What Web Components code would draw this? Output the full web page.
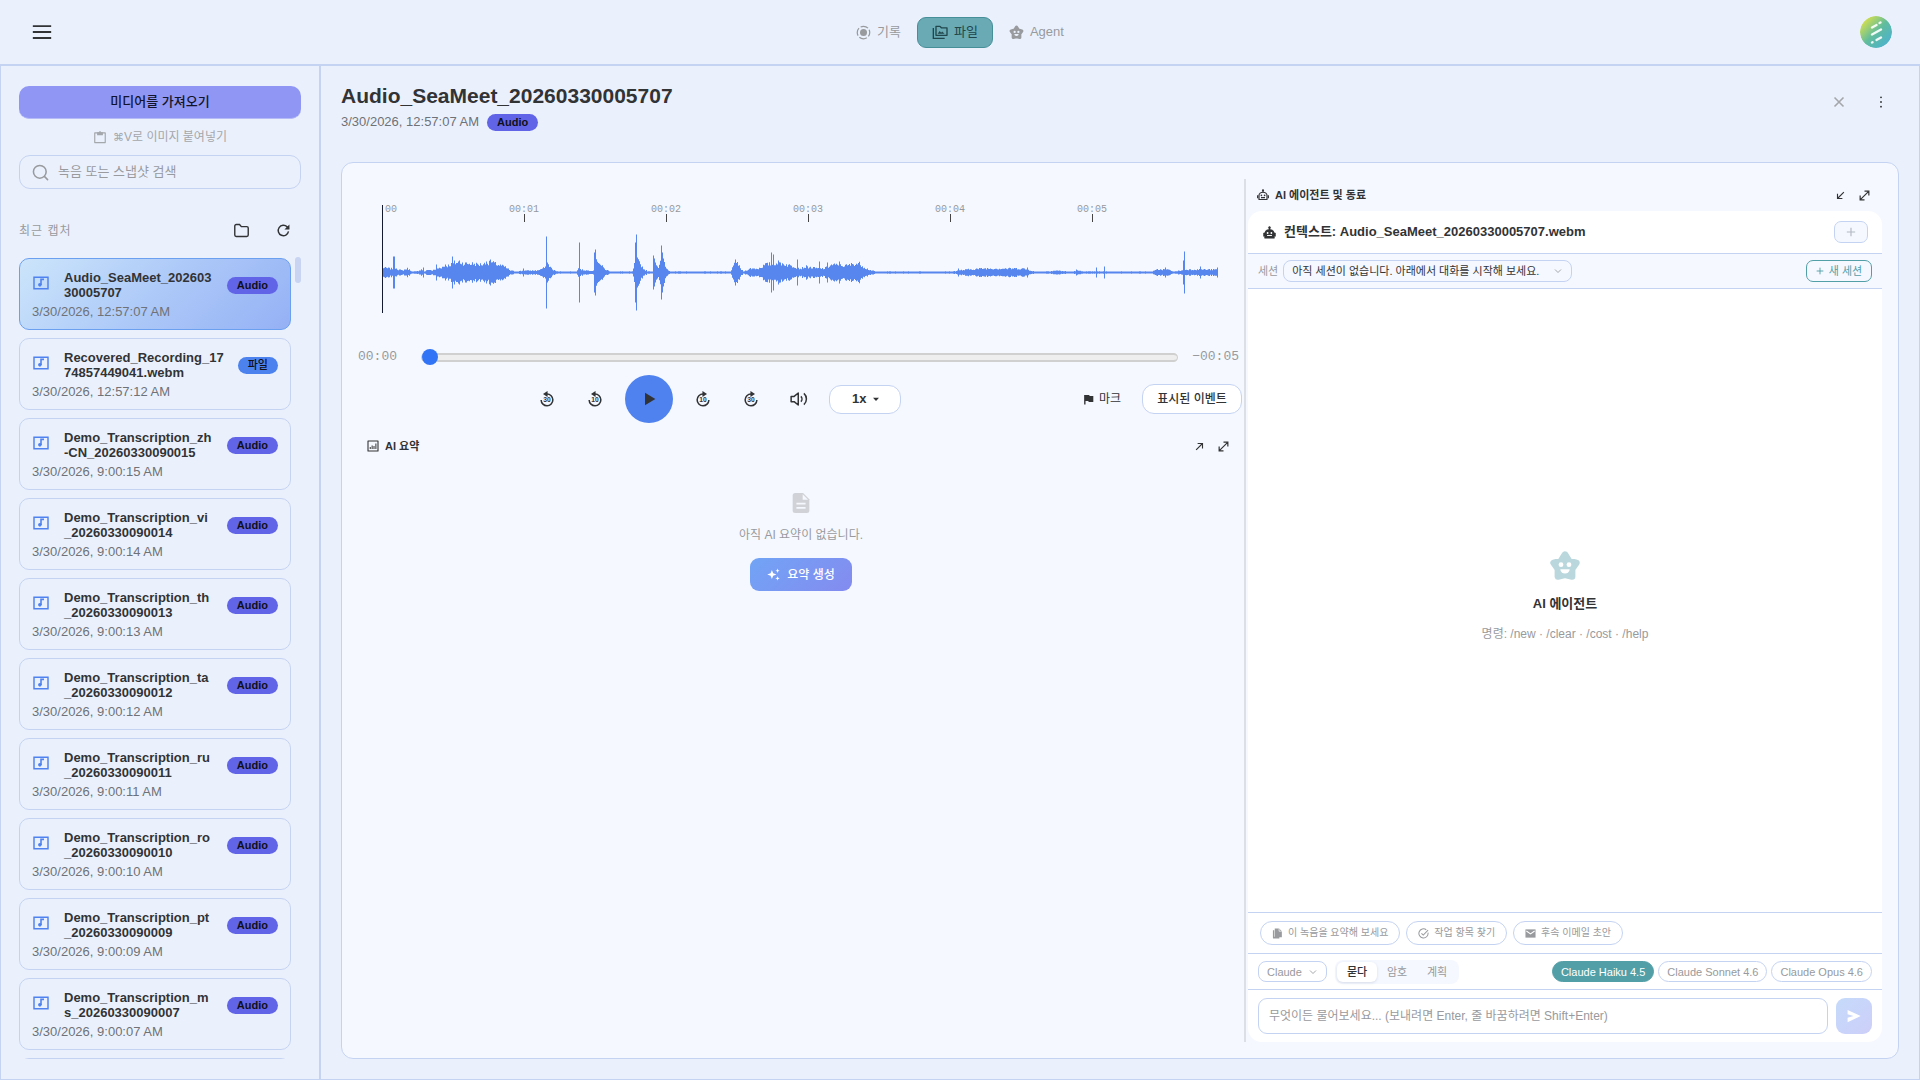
<!DOCTYPE html>
<html lang="ko">
<head>
<meta charset="utf-8">
<title>Audio_SeaMeet_20260330005707</title>
<style>
  html, body { height: 100%; margin: 0; }
  body {
    --line: #c5d3f2; --ink: #323335; --muted: #989a9d; --sub: #6f7276;
    --blue: #4f82ee; --teal: #529fa8; --page: #eaf1fd; --panel: #f5f8ff;
    font-family: "Liberation Sans", "Noto Sans CJK KR", sans-serif;
    font-size: 13px; line-height: 16px; color: var(--ink); background: var(--page);
  }
</style>
</head>
<body>
<sm-app></sm-app>
<script>
const BASE = `
*{box-sizing:border-box}
button,input,select{font:inherit;color:inherit;margin:0;letter-spacing:inherit}
button{display:inline-flex;align-items:center;justify-content:center;background:none;border:0;padding:0;cursor:pointer;white-space:nowrap}
h1,h2,h3,p{margin:0;font-size:inherit;font-weight:inherit}
svg{display:block}
`;
const STAR = 'M12 3.500 15 8.200 20.500 9.700 17.300 14.200 17.300 19.800 12 18.600 6.700 19.800 6.700 14.200 3.500 9.700 9 8.200Z';
const ICONS = {
  menu: '<path d="M2 5.500h20M2 12h20M2 18.500h20" stroke="currentColor" stroke-width="2"/>',
  record: '<circle cx="12" cy="12" r="5.600" fill="currentColor"/><circle cx="12" cy="12" r="10" fill="none" stroke="currentColor" stroke-width="2" stroke-dasharray="12.700 3" stroke-dashoffset="6"/>',
  files: '<g fill="none" stroke="currentColor" stroke-width="2"><path d="M2 6v15.500h17"/><path d="M6 3.500h6l2 2.200h8.500V17H6z" stroke-linejoin="round"/></g><path d="M8.500 14.500l3-4 2.200 2.600 1.500-2 3.600 3.400z" fill="currentColor"/>',
  star: `<path d="${STAR}" fill="currentColor" stroke="currentColor" stroke-width="5" stroke-linejoin="round"/><circle cx="9" cy="11" r="1.800" fill="var(--face,#fff)"/><circle cx="15" cy="11" r="1.800" fill="var(--face,#fff)"/><path d="M8.500 14.500h7a3.500 3.200 0 0 1-7 0z" fill="var(--face,#fff)"/>`,
  clip: '<path d="M3 5h18v16.500H3z" fill="none" stroke="currentColor" stroke-width="2" stroke-linejoin="round"/><path d="M7 4h3a2 2 0 0 1 4 0h3v5H7z" fill="currentColor"/>',
  search: '<g fill="none" stroke="currentColor" stroke-width="2.200" stroke-linecap="round"><circle cx="11" cy="11" r="9"/><path d="M17.800 17.800l4.200 4.200"/></g>',
  folder: '<path d="M2.500 5.500a2 2 0 0 1 2-2h4.700l2.600 3h7.700a2 2 0 0 1 2 2V18.500a2 2 0 0 1-2 2h-15a2 2 0 0 1-2-2z" fill="none" stroke="currentColor" stroke-width="2"/>',
  refresh: '<path d="M20 13.500A8.300 8.300 0 1 1 17.800 6.200L20.500 9" fill="none" stroke="currentColor" stroke-width="2.300"/><path d="M21.500 2.500v8h-8z" fill="currentColor"/>',
  media: '<path d="M1.500 3.500h21v17h-21z" fill="none" stroke="currentColor" stroke-width="2.200"/><circle cx="10.300" cy="14.800" r="2.700" fill="currentColor"/><path d="M12 15V6.500h4.500" fill="none" stroke="currentColor" stroke-width="2.400"/>',
  x: '<path d="M3 3l18 18M21 3L3 21" stroke="currentColor" stroke-width="3.200"/>',
  dots: '<g fill="currentColor"><circle cx="12" cy="4" r="1.600"/><circle cx="12" cy="12" r="1.600"/><circle cx="12" cy="20" r="1.600"/></g>',
  back: '<path d="M12 4.500a8.800 8.800 0 1 1-8.800 9" fill="none" stroke="currentColor" stroke-width="2.300"/><path d="M12.800 0v9L6 4.500z" fill="currentColor"/>',
  fwd: '<path d="M12 4.500a8.800 8.800 0 1 0 8.800 9" fill="none" stroke="currentColor" stroke-width="2.300"/><path d="M11.200 0v9L18 4.500z" fill="currentColor"/>',
  play: '<path d="M6 2.500v19L21.500 12z" fill="currentColor"/>',
  volume: '<g fill="none" stroke="currentColor" stroke-width="2"><path d="M1.500 8.500h4L11 4v16l-5.500-4.500h-4z" stroke-linejoin="round"/><path d="M14.500 8.500a5 5 0 0 1 0 7M18.500 4.500a10 10 0 0 1 0 15"/></g>',
  flag: '<path d="M2.500 2h11l1 2.500h8v13h-10l-1-2.500H5.500v8h-3z" fill="currentColor"/>',
  caret: '<path d="M3 8h18L12 18z" fill="currentColor"/>',
  chevron: '<path d="M3 7.500l9 9 9-9" fill="none" stroke="currentColor" stroke-width="2.600"/>',
  chart: '<path d="M2 2h20v20H2z" fill="none" stroke="currentColor" stroke-width="2.200" stroke-linejoin="round"/><path d="M6.500 18v-4M10.300 18v-7M14 18v-6M17.800 18V7" stroke="currentColor" stroke-width="2"/>',
  ne: '<path d="M3 21L20 4M7 4h13v13" fill="none" stroke="currentColor" stroke-width="3"/>',
  sw: '<path d="M21 3L4 20M17 20H4V7" fill="none" stroke="currentColor" stroke-width="3"/>',
  expand: '<path d="M4 20L20 4M12 2.500h9.500V12M2.500 12v9.500H12" fill="none" stroke="currentColor" stroke-width="2.600"/>',
  doc: '<path d="M5 0h9.500L22 7.500V21a3 3 0 0 1-3 3H5a3 3 0 0 1-3-3V3a3 3 0 0 1 3-3z" fill="currentColor"/><path d="M14 1.500V8h6.500z" fill="var(--panel)"/><path d="M6.500 12.800h11M6.500 17.800h11" stroke="var(--panel)" stroke-width="2"/>',
  spark: '<path d="M9 3.500l2.400 6.100L17.500 12l-6.100 2.400L9 20.500l-2.400-6.100L.500 12l6.100-2.400zM19.500 1l1.100 3 3 1.100-3 1.100-1.100 3-1.100-3-3-1.100 3-1.100zM19.500 15l1.100 3 3 1.100-3 1.100-1.100 3-1.100-3-3-1.100 3-1.100z" fill="currentColor"/>',
  robotLine: '<g fill="none" stroke="currentColor" stroke-width="2.400"><path d="M4 21V13a8 6.500 0 0 1 16 0v8z" stroke-linejoin="round"/><path d="M12 7V3M1.300 12.500v6M22.700 12.500v6M8 17.200h8"/></g><circle cx="12" cy="2.700" r="2.200" fill="currentColor"/><circle cx="8.800" cy="12.700" r="1.700" fill="currentColor"/><circle cx="15.200" cy="12.700" r="1.700" fill="currentColor"/>',
  robot: '<path d="M12 1a2 2 0 0 1 1 3.700V6.500a8 8 0 0 1 8 6.500h2v6h-2v3.500H3V19H1v-6h2a8 8 0 0 1 8-6.500V4.700A2 2 0 0 1 12 1z" fill="currentColor" stroke="currentColor"/><circle cx="8.500" cy="13" r="1.700" fill="#fff"/><circle cx="15.500" cy="13" r="1.700" fill="#fff"/><path d="M7.500 17.500h9" stroke="#fff" stroke-width="1.800"/>',
  plus: '<path d="M12 2v20M2 12h20" stroke="currentColor" stroke-width="2.800"/>',
  note: '<path d="M2 5h3v14h11v4H4a2 2 0 0 1-2-2z" fill="currentColor"/><path d="M6 1h9.500l6 6V20H6z" fill="currentColor"/><path d="M15.500 1v6h6" fill="none" stroke="#fff" stroke-width="1.500"/>',
  check: '<g fill="none" stroke="currentColor" stroke-width="2.200"><path d="M18 3.800A10 10 0 1 0 21.800 10"/><path d="M7.500 11.500l4 4L22 4.500"/></g>',
  mail: '<path d="M1 3h22v18H1z" fill="currentColor"/><path d="M3 6.500l9 6.500 9-6.500" fill="none" stroke="#fff" stroke-width="2.200"/>',
  send: '<path d="M1 1.500L23.500 12 1 22.500V15l10-3L1 9z" fill="currentColor"/>',
};
function define(name, css, html, ready) {
  const t = document.createElement('template');
  customElements.define(name, class extends HTMLElement {
    constructor() { super(); this.attachShadow({ mode: 'open' }); }
    connectedCallback() {
      if (this.done) return;
      this.done = true;
      t.innerHTML = `<style>${BASE}${css}</style>${typeof html === 'function' ? html(this) : html}`;
      this.shadowRoot.append(t.content.cloneNode(true));
      if (ready) ready(this.shadowRoot, this);
    }
  });
}

define('sm-icon', ':host{display:inline-block;flex:none}', el => {
  const s = el.getAttribute('size') || 16;
  const label = el.getAttribute('digits');
  return `<svg width="${s}" height="${s}" viewBox="0 0 24 24" aria-hidden="true">${ICONS[el.getAttribute('name')]}${label ? `<text x="12" y="17" text-anchor="middle" font-size="10" font-weight="700" fill="currentColor">${label}</text>` : ''}</svg>`;
});

define('sm-pill', `
:host{display:block;flex:none;height:17px;padding:0 10px;border-radius:9px;background:#6264e8;color:#101018;font-size:11px;line-height:16px;font-weight:700}
:host([kind=file]){background:#4c82ee;font-weight:500}
`, '<slot></slot>');

define('sm-select', `
:host{display:block;position:relative;flex:none;color:var(--fg,inherit)}
select{appearance:none;display:block;width:100%;height:var(--h,22px);padding:0 var(--pr,22px) 0 var(--pl,8px);border:1px solid var(--line);border-radius:var(--r,8px);background:var(--fill,#fff);outline:0}
sm-icon{position:absolute;right:var(--cr,9px);top:50%;transform:translateY(-50%);pointer-events:none;color:var(--mark,var(--muted))}
`, el => `<select aria-label="${el.getAttribute('label')}"><option>${el.getAttribute('value')}</option></select><sm-icon name="${el.getAttribute('mark') || 'chevron'}" size="8"></sm-icon>`);

define('sm-header', `
:host{display:grid;grid-template-columns:1fr auto 1fr;align-items:center;height:65px;padding:0 28px;border-bottom:1px solid var(--line)}
.menu{justify-self:start;width:28px;height:28px}
nav{display:flex;gap:1px;color:var(--muted)}
nav button{height:31px;padding:0 14px;gap:6px;border-radius:9px;border:1px solid transparent;--face:var(--page)}
nav .on{background:#69aab4;border-color:#468f99;color:#21464c}
.avatar{justify-self:end;width:32px;height:32px;border-radius:50%;overflow:hidden}
`, `
<button class="menu" aria-label="메뉴"><sm-icon name="menu" size="22"></sm-icon></button>
<nav>
<button><sm-icon name="record" size="15"></sm-icon>기록</button>
<button class="on" aria-current="page"><sm-icon name="files" size="16"></sm-icon>파일</button>
<button><sm-icon name="star" size="15"></sm-icon>Agent</button>
</nav>
<button class="avatar" aria-label="계정"><svg width="32" height="32" viewBox="0 0 32 32"><defs><linearGradient id="g" x1="0" y1="0" x2="1" y2="1"><stop offset=".1" stop-color="#dde24a"/><stop offset=".5" stop-color="#62bd9c"/><stop offset=".8" stop-color="#50b4c4"/></linearGradient></defs><circle cx="16" cy="16" r="16" fill="url(#g)"/><path d="M12 11.500l4.500-2.500M19.500 7l1-.500M12 18.500l9-5M16.500 24l4.500-2.500M12 26.500l.500-.200" stroke="#fff" stroke-width="2.400" stroke-linecap="round" opacity=".9"/></svg></button>
`);

define('sm-recording', `
:host{display:block;flex:none;height:72px;padding:11px 12px;border:1px solid var(--line);border-radius:10px}
:host([selected]){background:linear-gradient(135deg,#cce5fb,#adc9f8 50%,#95b1f5);border-color:#6b9ff0}
.row{display:flex;align-items:center}
sm-icon{color:var(--blue);margin:0 15px 0 1px;align-self:flex-start;padding-top:5px}
h3{flex:1;font-weight:700;line-height:15px;word-break:break-all;margin-right:12px}
p{margin-top:4px;line-height:16px;color:var(--sub)}
`, el => el.hasAttribute('date') ? `<div class="row"><sm-icon name="media" size="16"></sm-icon><h3>${el.getAttribute('name')}</h3><sm-pill kind="${el.getAttribute('kind')}">${el.getAttribute('kind') === 'file' ? '파일' : 'Audio'}</sm-pill></div><p>${el.getAttribute('date')}</p>` : '');

const RECORDINGS = [
  ['Audio_SeaMeet_20260330005707', '12:57:07'], ['Recovered_Recording_1774857449041.webm', '12:57:12', 'file'],
  ['Demo_Transcription_zh-CN_20260330090015', '9:00:15'], ['Demo_Transcription_vi_20260330090014', '9:00:14'],
  ['Demo_Transcription_th_20260330090013', '9:00:13'], ['Demo_Transcription_ta_20260330090012', '9:00:12'],
  ['Demo_Transcription_ru_20260330090011', '9:00:11'], ['Demo_Transcription_ro_20260330090010', '9:00:10'],
  ['Demo_Transcription_pt_20260330090009', '9:00:09'], ['Demo_Transcription_ms_20260330090007', '9:00:07'],
];
define('sm-sidebar', `
:host{display:flex;flex-direction:column;min-height:0;padding:20px 18px;border:1px solid var(--line)}
.import{flex:none;height:33px;border-radius:10px;background:#8f96f3;color:#12142b;font-weight:500;border-bottom:1px solid #b4bbf7}
.hint{display:flex;justify-content:center;align-items:center;gap:6px;height:36px;font-size:12px;color:#a4a7ab}
kbd{font-family:"DejaVu Sans",sans-serif;font-size:11px}
label{flex:none;display:flex;align-items:center;gap:8px;height:34px;padding:0 12px;border:1px solid var(--line);border-radius:11px;color:var(--muted)}
label sm-icon{width:18px}
input{flex:1;min-width:0;border:0;background:none;outline:0;padding:0}
input::placeholder{color:var(--muted);opacity:1}
.head{flex:none;display:flex;align-items:center;gap:26px;height:68px;padding:15px 10px 0 0;color:var(--ink)}
h2{flex:1;font-size:12px;letter-spacing:1px;color:var(--muted)}
.scroll{flex:1;display:flex;gap:4px;min-height:0}
.list{flex:1;display:flex;flex-direction:column;gap:8px;padding-top:1px;overflow:hidden}
.thumb{width:6px;height:26px;border-radius:3px;background:#c8d4f2}
`, `
<button class="import">미디어를 가져오기</button>
<div class="hint"><sm-icon name="clip" size="14"></sm-icon><span><kbd>⌘</kbd>V로 이미지 붙여넣기</span></div>
<label><sm-icon name="search" size="17"></sm-icon><input type="search" placeholder="녹음 또는 스냅샷 검색" aria-label="녹음 또는 스냅샷 검색"></label>
<div class="head"><h2>최근 캡처</h2><button aria-label="폴더"><sm-icon name="folder" size="17"></sm-icon></button><button aria-label="새로고침"><sm-icon name="refresh" size="15"></sm-icon></button></div>
<div class="scroll"><div class="list">${RECORDINGS.map(([n, d, k], i) => `<sm-recording name="${n}" date="3/30/2026, ${d} AM" kind="${k || 'audio'}" ${i ? '' : 'selected'}></sm-recording>`).join('')}<sm-recording></sm-recording></div><div class="thumb"></div></div>
`);

/* Loudness envelope: [x, half height] pairs joined by straight lines, and single transients on top. */
const ENV = [0,5,8,4,10,4,13,5,16,3,20,2,25,4,30,1,34,1,39,3,42,1,46,3,50,2,58,5,65,7,71,9,77,11,82,9,90,9,97,8,103,9,110,10,115,8,122,6,128,2,134,1,142,2,155,2,160,4,163,5,166,8,170,3,175,1,194,1,196,4,198,3,205,2,211,2,213,17,218,8,223,3,228,1,250,1,252,8,254,14,259,7,262,3,266,1,270,1,271,16,276,4,278,10,281,14,284,4,288,1,295,1,348,1,351,6,354,12,358,4,361,1,368,4,376,4,383,8,390,9,396,10,404,8,412,6,418,4,424,6,428,5,436,4,442,4,450,8,458,7,465,7,472,9,477,9,481,6,486,3,493,1,500,1,570,1,576,2,585,3,600,4,615,4,627,4,640,4,645,3,652,1,660,1,675,2,685,1,690,1,695,2,702,1,710,1,718,1,770,1,775,3,785,3,792,1,805,3,820,3,830,3,836,3];
const HITS = [[11,16],[12,16],[41,5],[54,8],[63,8],[70,16],[72,12],[77,12],[104,11],[108,13],[141,4],[164,36],[165,10],[197,30],[212,20],[213,23],[253,30],[254,38],[255,14],[271,17],[272,14],[279,27],[280,20],[281,14],[353,13],[389,20],[391,18],[415,13],[437,11],[445,10],[457,11],[576,4],[645,5],[694,3],[714,5],[722,6],[783,5],[801,12],[802,21],[818,6],[835,5]];
define('sm-waveform', `
:host{display:block;padding:24px 0 0 24px;overflow:hidden}
svg{width:860px;height:110px}
`, '<svg viewBox="0 -2 860 110" role="img" aria-label="파형"></svg>', root => {
  const hit = new Map(HITS);
  let seed = 7, bars = '', k = 0;
  for (let x = 0; x < 836; x++) {
    while (k + 4 < ENV.length && ENV[k + 2] <= x) k += 2;
    const [x0, a, x1, b] = ENV.slice(k, k + 4);
    const base = a + (b - a) * Math.min(1, (x - x0) / (x1 - x0));
    seed = (seed * 1103515245 + 12345) % 2147483648;
    const h = Math.max(1, base * (0.72 + 0.5 * seed / 2147483648), hit.get(x) || 0);
    bars += `M${x} ${67.5 - h}h1V${67.5 + h}h-1z`;
  }
  let ruler = '<text x="3" y="7" text-anchor="start">00</text>';
  for (let s = 1; s < 6; s++) ruler += `<text x="${142 * s}" y="7" text-anchor="middle">00:0${s}</text><path d="M${142 * s} 9h1v8h-1z" fill="#444"/>`;
  root.querySelector('svg').innerHTML = `<g font-family="Liberation Mono, monospace" font-size="10" fill="#96989c">${ruler}</g><path d="${bars}" fill="#5686ee"/><path d="M0 0h1v108H0z" fill="#151a33"/>`;
});

define('sm-player', `
:host{display:block}
.seek{display:flex;align-items:center;gap:14px;margin-top:36px;padding-right:5px;height:16px;font:13px/16px "Liberation Mono",monospace;color:var(--muted)}
.seek span{flex:none}
.seek span:first-child{width:49px}
input{flex:1;min-width:0;height:16px;appearance:none;background:none}
input::-webkit-slider-runnable-track{height:9px;border:2px solid #d0d0d0;border-width:2px 1px;border-radius:5px;background:#eee}
input::-webkit-slider-thumb{appearance:none;width:16px;height:16px;margin-top:-6px;border-radius:50%;background:#3274f6}
.bar{display:flex;align-items:center;margin-top:9px;height:50px}
.keys{flex:1;display:flex;justify-content:center;align-items:center;gap:12px}
.keys button{width:36px;height:36px}
.keys .play{width:48px;height:48px;border-radius:50%;background:var(--blue)}
sm-select{width:72px;font-weight:700;--h:29px;--r:12px;--cr:21px;--mark:var(--ink);--pl:22px;--pr:0}
.mark{padding:0 11px;gap:5px;font-size:12px}
.events{height:30px;width:100px;margin:0 2px 0 10px;border:1px solid var(--line);border-radius:12px;background:#fff;font-size:12px;font-weight:500}
`, `
<div class="seek"><span>00:00</span><input type="range" min="0" max="5" value="0" aria-label="재생 위치"><span>−00:05</span></div>
<div class="bar"><div class="keys">
<button aria-label="30초 뒤로"><sm-icon name="back" size="16" digits="30"></sm-icon></button>
<button aria-label="10초 뒤로"><sm-icon name="back" size="16" digits="10"></sm-icon></button>
<button class="play" aria-label="재생"><sm-icon name="play" size="16"></sm-icon></button>
<button aria-label="10초 앞으로"><sm-icon name="fwd" size="16" digits="10"></sm-icon></button>
<button aria-label="30초 앞으로"><sm-icon name="fwd" size="16" digits="30"></sm-icon></button>
<button aria-label="음량"><sm-icon name="volume" size="18"></sm-icon></button>
<sm-select label="재생 속도" value="1x" mark="caret"></sm-select></div>
<button class="mark"><sm-icon name="flag" size="11"></sm-icon>마크</button><button class="events">표시된 이벤트</button></div>
`);

define('sm-panel-title', `
:host{display:flex;align-items:center;gap:6px;font-size:11px;font-weight:700}
h2{flex:1}
div{display:flex;gap:12px}
button{width:12px;height:12px}
`, el => `<sm-icon name="${el.getAttribute('icon')}" size="12"></sm-icon><h2><slot></slot></h2><div><button aria-label="창 전환"><sm-icon name="${el.getAttribute('arrow')}" size="9"></sm-icon></button><button aria-label="확대"><sm-icon name="expand" size="11"></sm-icon></button></div>`);

define('sm-summary', `
:host{display:block;padding-top:14px}
sm-panel-title{padding:0 15px 0 9px}
.empty{display:flex;flex-direction:column;align-items:center;padding-top:39px;font-size:12px;color:var(--muted)}
.empty sm-icon[name=doc]{color:#d0d2d7}
p{margin:14px 0 15px}
.empty button{height:33px;width:102px;gap:7px;border-radius:9px;background:linear-gradient(135deg,#71a4f5,#848bf0);color:#fff;font-weight:500}
`, `
<sm-panel-title icon="chart" arrow="ne">AI 요약</sm-panel-title>
<div class="empty"><sm-icon name="doc" size="20"></sm-icon><p>아직 AI 요약이 없습니다.</p><button><sm-icon name="spark" size="13"></sm-icon>요약 생성</button></div>
`);

define('sm-agent', `
:host{display:flex;flex-direction:column;min-width:0;font-size:11px}
sm-panel-title{height:32px;flex:none;padding:0 12px 0 9px}
.box{flex:1;display:flex;flex-direction:column;border-radius:14px;background:#fff;overflow:hidden}
.box>div{flex:none;display:flex;align-items:center;border-bottom:1px solid var(--line)}
.box>.ctx{height:43px;padding:0 14px 0 15px;gap:8px;font-size:13px;font-weight:700}
h3{flex:1}
.add{width:34px;height:22px;border:1px solid var(--line);border-radius:7px;background:var(--panel);color:#b4b8c0}
.box>.session{height:35px;padding:0 10px;gap:5px;background:var(--panel);color:var(--muted)}
.session sm-select{width:289px;--fg:var(--ink);--fill:var(--panel);--cr:10px}
.new{margin-left:auto;width:66px;height:22px;gap:5px;border:1px solid var(--teal);border-radius:7px;color:var(--teal)}
.box>.body{flex:1;flex-direction:column;justify-content:center;padding-bottom:10px;color:var(--muted)}
.body sm-icon{color:#b9d7dc}
.body h3{flex:none;font-size:13px;font-weight:700;color:var(--ink);margin:14px 0}
.body p{font-size:12px}
.box>.tips{height:41px;padding:0 12px;gap:6px;color:var(--muted);font-size:10px}
.tips button{height:24px;padding:0 11px;gap:5px;border:1px solid var(--line);border-radius:12px}
.box>.tools{height:36px;padding:0 10px;gap:4px;color:var(--muted)}
.tools sm-select{width:69px;--h:21px;--cr:10px}
.modes{display:flex;margin:0 auto 0 4px;padding:2px;border-radius:8px;background:var(--panel)}
.modes button{width:40px;height:20px;border-radius:6px}
.modes .on{background:#fff;color:var(--ink);font-weight:500;box-shadow:0 1px 3px #2a3b6626}
.model{height:21px;padding:0 8px;border:1px solid var(--line);border-radius:11px}
.model.on{background:var(--teal);border-color:var(--teal);color:#fff}
.box>form{display:flex;gap:8px;padding:8px 10px;margin:0}
form input{flex:1;min-width:0;height:36px;padding:0 10px;border:1px solid var(--line);border-radius:9px;font-size:12px;outline:0}
input::placeholder{color:var(--muted);opacity:1}
form button{width:36px;height:36px;border-radius:9px;background:linear-gradient(135deg,#c5dafb,#cdcff9);color:#fff}
`, `
<sm-panel-title icon="robotLine" arrow="sw">AI 에이전트 및 동료</sm-panel-title>
<div class="box">
<div class="ctx"><sm-icon name="robot" size="13"></sm-icon><h3>컨텍스트: Audio_SeaMeet_20260330005707.webm</h3><button class="add" aria-label="추가"><sm-icon name="plus" size="10"></sm-icon></button></div>
<div class="session"><span>세션</span><sm-select label="세션" value="아직 세션이 없습니다. 아래에서 대화를 시작해 보세요."></sm-select><button class="new"><sm-icon name="plus" size="8"></sm-icon>새 세션</button></div>
<div class="body"><sm-icon name="star" size="32"></sm-icon><h3>AI 에이전트</h3><p>명령: /new · /clear · /cost · /help</p></div>
<div class="tips"><button><sm-icon name="note" size="11"></sm-icon>이 녹음을 요약해 보세요</button><button><sm-icon name="check" size="11"></sm-icon>작업 항목 찾기</button><button><sm-icon name="mail" size="11"></sm-icon>후속 이메일 초안</button></div>
<div class="tools"><sm-select label="제공자" value="Claude"></sm-select><span class="modes"><button class="on">묻다</button><button>암호</button><button>계획</button></span><button class="model on">Claude Haiku 4.5</button><button class="model">Claude Sonnet 4.6</button><button class="model">Claude Opus 4.6</button></div>
<form><input type="text" aria-label="메시지" placeholder="무엇이든 물어보세요... (보내려면 Enter, 줄 바꿈하려면 Shift+Enter)"><button type="button" aria-label="보내기"><sm-icon name="send" size="14"></sm-icon></button></form>
</div>
`);

define('sm-detail', `
:host{display:flex;flex-direction:column;min-width:0;min-height:0;padding:20px;border:1px solid var(--line)}
header{flex:none;display:flex;height:76px}
.t{flex:1}
h1{font-size:21px;line-height:24px;font-weight:700;margin-bottom:4px;margin-top:-2px}
.meta{display:flex;align-items:center;gap:8px;height:20px;color:var(--sub)}
.acts{display:flex;gap:29px;height:32px;padding-right:11px;align-items:center;color:#a4a6a9}
.acts sm-icon[name=dots]{color:var(--ink)}
.card{flex:1;display:grid;grid-template-columns:886fr 638fr;min-height:0;padding:16px;border:1px solid var(--line);border-radius:12px;background:var(--panel)}
.left{min-width:0;display:flex;flex-direction:column}
sm-agent{border-left:2px solid #dcdfe6;padding-left:2px}
`, `
<header><div class="t"><h1>Audio_SeaMeet_20260330005707</h1><div class="meta"><span>3/30/2026, 12:57:07 AM</span><sm-pill>Audio</sm-pill></div></div>
<div class="acts"><button aria-label="닫기"><sm-icon name="x" size="12"></sm-icon></button><button aria-label="더보기"><sm-icon name="dots" size="14"></sm-icon></button></div></header>
<div class="card"><div class="left"><sm-waveform></sm-waveform><sm-player></sm-player><sm-summary></sm-summary></div><sm-agent></sm-agent></div>
`);

define('sm-app', `
:host{display:grid;grid-template:auto minmax(0,1fr)/320px minmax(0,1fr);height:100vh}
sm-header{grid-column:1/-1}
`, '<sm-header></sm-header><sm-sidebar></sm-sidebar><sm-detail></sm-detail>');
</script>
</body>
</html>
